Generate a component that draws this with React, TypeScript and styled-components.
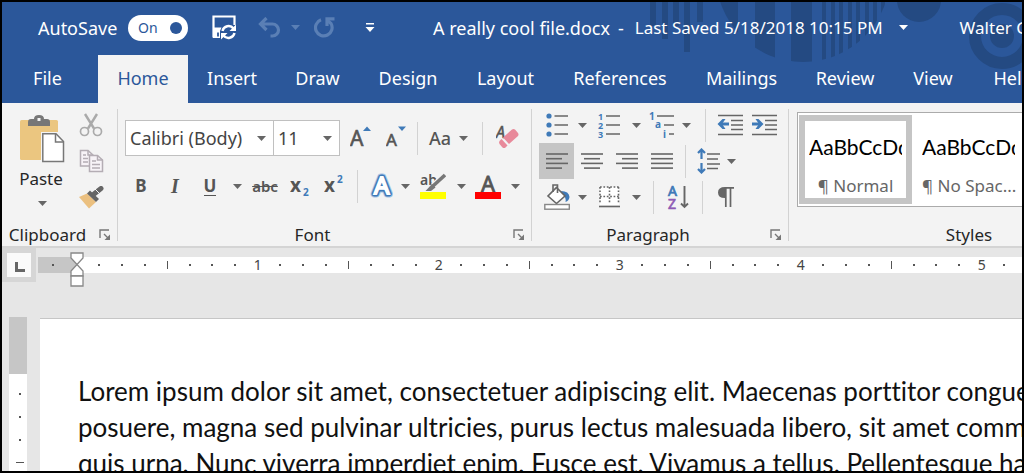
import React from "react";
import styled, { createGlobalStyle } from "styled-components";

const INK = "#666666";
const BLUE = "#3f7ab8";
const UI = '"Noto Sans", "Open Sans", sans-serif';

const GlobalStyle = createGlobalStyle`
  * { box-sizing: border-box; }
  body { margin: 0; background: #000; }
  button, select { font: inherit; color: inherit; }
  svg { display: block; flex: none; }
`;

const Frame = styled.div`
  display: flex;
  flex-direction: column;
  height: 100vh;
  border: 2px solid #000;
  overflow: hidden;
  background: #e6e6e6;
  font: 17px/24px ${UI};
  color: #262626;
`;

const Header = styled.header`
  position: relative;
  flex: none;
  background: #2b579a;
  color: #fff;
  overflow: hidden;
`;

const HeaderArt = styled.svg`
  position: absolute;
  top: 0;
  right: 0;
`;

const TitleBar = styled.div`
  position: relative;
  display: flex;
  align-items: center;
  height: 53px;
  padding: 0 0 2px 36px;
  white-space: nowrap;
  font-size: 18px;
`;

const AutoSave = styled.label`
  flex: none;
  display: flex;
  align-items: center;
  width: 150px;
  justify-content: space-between;
`;

const Switch = styled.span`
  display: flex;
  align-items: center;
  width: 60px;
  height: 26px;
  padding-left: 10px;
  border-radius: 13px;
  background: #fff;
  color: #2b579a;
  font-size: 14px;

  input {
    appearance: none;
    width: 12px;
    height: 12px;
    margin: 0 0 0 12px;
    border-radius: 50%;
    background: #2b579a;
  }
`;

const QuickButton = styled.button<{ $w: number }>`
  flex: none;
  display: flex;
  justify-content: center;
  width: ${(p) => p.$w}px;
  padding: 0;
  border: 0;
  background: none;
`;

const QuickTools = styled.div`
  flex: none;
  display: flex;
  align-items: center;
  margin-left: 13px;
  width: 232px;
`;

const FileName = styled.button`
  flex: none;
  display: flex;
  align-items: center;
  gap: 8px;
  padding: 0;
  border: 0;
  background: none;
  white-space: nowrap;
  svg { margin-left: 8px; }
`;

const SavedAt = styled.span`
  margin-left: 3px;
  font-size: 17px;
`;

const Account = styled.button`
  flex: none;
  padding: 0;
  border: 0;
  margin-left: 52px;
  background: none;
  font-size: 17px;
`;

const Tabs = styled.nav`
  position: relative;
  display: flex;
  height: 48px;
  white-space: nowrap;
`;

const Tab = styled.button<{ $w: number; $active?: boolean }>`
  flex: none;
  width: ${(p) => p.$w}px;
  padding: 0 0 2px;
  border: 0;
  font-size: 18px;
  background: ${(p) => (p.$active ? "#f3f3f3" : "none")};
  color: ${(p) => (p.$active ? "#2b579a" : "#fff")};
  &:first-child { margin-right: 5px; }
`;

const Ribbon = styled.div`
  flex: none;
  display: flex;
  height: 145px;
  background: #f3f3f3;
  border-bottom: 2px solid #d4d4d4;
  overflow: hidden;
`;

const Group = styled.section<{ $w: number }>`
  flex: 0 0 ${(p) => p.$w}px;
  display: flex;
  flex-direction: column;
  justify-content: space-between;
`;

const Divider = styled.div`
  flex: none;
  width: 1px;
  height: 132px;
  margin-top: 6px;
  background: #d2d2d2;
`;

const GroupFooter = styled.div`
  display: flex;
  align-items: center;
  height: 23px;
`;

const GroupLabel = styled.span`
  flex: 1;
  text-align: center;
`;

const Launcher = styled.button`
  width: 24px;
  padding: 0 0 0 6px;
  border: 0;
  background: none;
`;

const ClipboardBody = styled.div`
  display: flex;
  padding-top: 4px;
`;

const PasteButton = styled.button`
  display: flex;
  flex-direction: column;
  align-items: center;
  width: 76px;
  padding: 8px 0 0 4px;
  border: 0;
  background: none;
  > span { margin: 4px 2px 10px 0; }
`;

const Column = styled.div`
  display: flex;
  flex-direction: column;
`;

const Rows = styled.div<{ $top: number; $gap: number }>`
  display: flex;
  flex-direction: column;
  gap: ${(p) => p.$gap}px;
  padding: ${(p) => p.$top}px 0 0 7px;
`;

const Row = styled.div<{ $h: number }>`
  display: flex;
  align-items: center;
  height: ${(p) => p.$h}px;
`;

const Tool = styled.button<{ $w: number; $on?: boolean }>`
  flex: none;
  display: flex;
  align-items: center;
  justify-content: center;
  width: ${(p) => p.$w}px;
  height: 36px;
  padding: 0;
  border: 0;
  color: #555;
  background: ${(p) => (p.$on ? "#c5c5c5" : "none")};
`;

const CaseLabel = styled.span`
  font-size: 18px;
  font-weight: 500;
`;

const Bold = styled.span`
  font-weight: 700;
`;

const Italic = styled.span`
  font: italic 700 20px/24px "Liberation Serif", serif;
`;

const Underline = styled.span`
  font-weight: 700;
  line-height: 18px;
  border-bottom: 1px solid #555;
`;

const Strike = styled.s`
  font-size: 15px;
  font-weight: 600;
`;

const Rule = styled.div<{ $before?: number; $after?: number }>`
  flex: none;
  width: 1px;
  height: 33px;
  margin: 0 ${(p) => p.$after ?? 6}px 0 ${(p) => p.$before ?? 6}px;
  background: #d2d2d2;
`;

const Picker = styled.div<{ $w: number }>`
  position: relative;
  flex: none;
  width: ${(p) => p.$w}px;
  margin-right: -1px;

  select {
    appearance: none;
    display: block;
    width: 100%;
    height: 36px;
    padding: 0 4px;
    border: 1px solid #c0c0c0;
    border-radius: 0;
    background: #fff;
    color: #444;
    font-size: 18px;
    outline: 0;
  }
  svg {
    position: absolute;
    right: 8px;
    top: 16px;
    pointer-events: none;
  }
`;

const Gallery = styled.div`
  display: flex;
  margin: 9px 0 0 8px;
  padding: 2px 1px;
  border: 1px solid #ababab;
  background: #fff;
`;

const StyleCard = styled.button<{ $on?: boolean }>`
  flex: none;
  width: 113px;
  height: 89px;
  padding: 12px 4px 0;
  border: 6px solid ${(p) => (p.$on ? "#c5c5c5" : "transparent")};
  background: none;
  color: #666;
  white-space: nowrap;
`;

const Sample = styled.span`
  display: block;
  overflow: hidden;
  margin-bottom: 14px;
  font: 21px/26px Lato, sans-serif;
  color: #000;
  text-align: left;
`;

const RulerRow = styled.div`
  flex: none;
  display: flex;
  height: 34px;
`;

const TabStop = styled.button`
  flex: none;
  display: flex;
  align-items: center;
  justify-content: center;
  width: 34px;
  padding: 4px 0 0 2px;
  border: 5px solid #d6d6d6;
  background: #fafafa;
`;

const Ruler = styled.div`
  flex: 1;
  display: flex;
  height: 16px;
  margin: 9px 0 0 2px;
  min-width: 0;
  background: #fff;
  font-size: 14px;
  line-height: 16px;
  color: #444;
`;

const RulerMargin = styled.div`
  flex: none;
  display: flex;
  align-items: center;
  position: relative;
  width: 39px;
  padding-left: 14px;
  margin-right: 11px;
  background: #c6c6c6;
`;

const Indent = styled.svg`
  position: absolute;
  right: -7px;
  top: -5px;
`;

const Inch = styled.div`
  flex: 0 0 181px;
  display: grid;
  grid-template-columns: repeat(8, 1fr);
  align-items: center;
  justify-items: center;
`;

const Mark = styled.i<{ $w: number; $h: number }>`
  width: ${(p) => p.$w}px;
  height: ${(p) => p.$h}px;
  background: #555;
`;

const Workspace = styled.main`
  flex: 1;
  min-height: 0;
  display: flex;
  gap: 13px;
  padding: 35px 0 0 7px;
  overflow: hidden;
`;

const SideRuler = styled.div`
  flex: none;
  display: flex;
  flex-direction: column;
  align-items: center;
  width: 18px;
  background: #fff;
`;

const SideMargin = styled.div`
  width: 100%;
  height: 57px;
  margin-bottom: 19px;
  background: #c6c6c6;
`;

const SideMarks = styled.div`
  display: flex;
  flex-direction: column;
  align-items: center;
  gap: 21px;
  padding-left: 4px;
`;

const Page = styled.article`
  flex: 1;
  min-width: 0;
  margin-top: 1px;
  padding: 54px 0 0 38px;
  border-top: 1px solid #c6c6c6;
  background: #fff;
  color: #111;
  font: 26px/36px Lato, sans-serif;
  font-variant-ligatures: none;
  white-space: nowrap;
  overflow: hidden;
  p { margin: 0; }
`;

const Caret = ({ fill = INK }: { fill?: string }) => (
  <svg width="9" height="5" viewBox="0 0 9 5"><path d="M0 0H9L4.500 5Z" fill={fill} /></svg>
);

const Drop = ({ label, w = 14 }: { label: string; w?: number }) => (
  <Tool $w={w} aria-label={label}><Caret /></Tool>
);

const LauncherIcon = () => (
  <svg width="12" height="12" viewBox="0 0 12 12" fill="none" stroke="#777" strokeWidth="1.400">
    <path d="M1 9V1H10M5 5L10 10" /><path d="M11 5.500V11H5.500Z" fill="#777" stroke="none" />
  </svg>
);

const Lines = ({ rows }: { rows: [number, number][] }) => (
  <svg width="24" height="18" viewBox="0 0 24 18" stroke={INK} strokeWidth="1.600">
    {rows.map(([a, b], i) => <path key={i} d={`M${a} ${2 + i * 4.700}H${b}`} />)}
  </svg>
);

const HeaderDecor = () => (
  <HeaderArt width="374" height="70" viewBox="648 2 374 70" fill="#244a82" aria-hidden="true">
    <defs><clipPath id="disc"><circle cx="803" cy="-25" r="87" /></clipPath></defs>
    <path d="M650 0h6v26h-6zM662 0h6v39h-6zM673 0h6v26h-6zM684 0h6v52h-6zM697 0h6v22h-6z" />
    <g clipPath="url(#disc)">
      <path d="M720 0h18v70h-18zM755 0h20v70h-20zM791 0h21v70h-21z" />
      {[822, 831, 839, 848, 856, 865, 873, 881].map((x) => <rect key={x} x={x} y="0" width="4" height="70" />)}
    </g>
    <circle cx="919" cy="0" r="22" />
    <circle cx="1002" cy="36" r="27" fill="none" stroke="#244a82" strokeWidth="12" />
    <circle cx="1002" cy="36" r="12" />
  </HeaderArt>
);

const SaveIcon = () => (
  <svg width="25" height="25" viewBox="0 0 25 25" fill="none" stroke="#fff">
    <path d="M1.500 22.500V1.500H22.500V10" strokeWidth="2.200" />
    <path d="M1 12.500H9.500L8 16V23H1Z" fill="#fff" stroke="none" />
    <path d="M6 17.500V21.500" stroke="#2b579a" strokeWidth="1.800" />
    <path d="M10.500 16A6.200 6.200 0 0 1 21.500 13.500M22.500 18A6.200 6.200 0 0 1 11.500 20.500" strokeWidth="2.400" />
    <path d="M24 9.500V16H17.500ZM9 24.500V18H15.500Z" fill="#fff" stroke="none" />
  </svg>
);

const UndoIcon = () => (
  <svg width="23" height="21" viewBox="0 0 23 21" fill="none" stroke="#5a7fb5" strokeWidth="3.200">
    <path d="M8.500 1L2.500 7L8.500 13M3 7H14.500A6 6 0 0 1 14.500 19H12.500" />
  </svg>
);

const RedoIcon = () => (
  <svg width="21" height="21" viewBox="0 0 21 21" fill="none" stroke="#5a7fb5" strokeWidth="3.200">
    <path d="M7 2.800A8.300 8.300 0 1 0 17 6.500L13 3" /><path d="M20.500 1.800H13V9" />
  </svg>
);

const MoreIcon = () => (
  <svg width="10" height="10" viewBox="0 0 10 10" fill="#fff"><path d="M1 0H9V1.600H1ZM0.500 4H9.500L5 9Z" /></svg>
);

const PasteIcon = () => (
  <svg width="45" height="48" viewBox="0 0 45 48">
    <rect x="0" y="5" width="38" height="40" rx="1.500" fill="#ebc680" />
    <path d="M8 11V7Q8 4 11 4H14Q14 0 19 0T24 4H27Q30 4 30 7V11Z" fill="#777" />
    <rect x="17.500" y="3" width="3" height="3" fill="#f3f3f3" />
    <path d="M21 17H45V48H21Z" fill="#f3f3f3" />
    <path d="M22.800 18.800H36L43.500 26.500V46.500H22.800Z" fill="#fff" stroke="#777" strokeWidth="1.500" />
    <path d="M35.500 19V27H43.500" fill="none" stroke="#777" strokeWidth="1.500" />
  </svg>
);

const CutIcon = () => (
  <svg width="24" height="24" viewBox="0 0 24 24" fill="none" stroke="#aaa">
    <path d="M6 1L15 15.500M18 1L9 15.500" strokeWidth="2.400" />
    <circle cx="5.500" cy="18.500" r="4" strokeWidth="1.700" /><circle cx="18.500" cy="18.500" r="4" strokeWidth="1.700" />
  </svg>
);

const CopyIcon = () => (
  <svg width="25" height="24" viewBox="0 0 25 24" fill="#f7f3f7" stroke="#b4adb4" strokeWidth="1.500">
    <path d="M1.500 1.500H9L14 6V17H1.500Z" /><path d="M9 1.500V6H14M4 6H7M4 9.500H9M4 13H9" fill="none" />
    <path d="M10.500 6.500H18.500L23.500 11V22.500H10.500Z" /><path d="M18.500 6.500V11H23.500M13 12H17M13 15.500H21M13 19H21" fill="none" />
  </svg>
);

const PainterIcon = () => (
  <svg width="26" height="23" viewBox="0 0 26 23">
    <path d="M1 11L9 7.500L18 16L11 22.500Z" fill="#ebc080" />
    <path d="M9 7.500L12 4.500L21 13L18 16Z" fill="#666" /><path d="M16 8L23 2.500" stroke="#666" strokeWidth="5" strokeLinecap="round" />
    <path d="M17 3L22 8" stroke="#f3f3f3" strokeWidth="1" />
  </svg>
);

const SizeIcon = ({ up }: { up?: boolean }) => (
  <svg width="22" height="26" viewBox="0 0 22 26" fontFamily={UI} fill="#555" stroke="#555" strokeWidth="0.600">
    <text x="0" y="21" fontSize={up ? 21 : 17}>A</text>
    <path d={up ? "M13 6H21L17 1.500Z" : "M12 1.500H20L16 6Z"} fill={BLUE} stroke="none" />
  </svg>
);

const EraserIcon = () => (
  <svg width="24" height="26" viewBox="0 0 24 26" fontFamily={UI}>
    <text x="0" y="13" fontSize="16" fontStyle="italic" fill="#555" stroke="#555" strokeWidth="0.500">A</text>
    <path d="M7 12.500L16 4.500Q17.500 3.500 19 4.500L22 8Q23 9.500 22 11L13 19Z" fill="#e8899a" />
    <path d="M5.500 14L11.500 20.500L9.500 22.500Q8 23.500 6.500 22.500L3.500 19Q2.500 17.500 3.500 16Z" fill="#e8899a" />
  </svg>
);

const ScriptIcon = ({ sup }: { sup?: boolean }) => (
  <svg width="21" height="24" viewBox="0 0 21 24" fontFamily={UI} fontWeight="700">
    <text x="0" y="18" fontSize="19" fill="#555">x</text>
    <text x="13" y={sup ? 9 : 22} fontSize="10" fill={BLUE}>2</text>
  </svg>
);

const EffectsIcon = () => (
  <svg width="24" height="26" viewBox="0 0 24 26" fontFamily={UI} fontSize="24">
    <text x="5" y="21" stroke="#a9c6e6" strokeWidth="7" strokeLinejoin="round">A</text>
    <text x="5" y="21" stroke={BLUE} strokeWidth="5" strokeLinejoin="round">A</text>
    <text x="5" y="21" fill="#fff" stroke="#fff" strokeWidth="1.800">A</text>
  </svg>
);

const HighlightIcon = () => (
  <svg width="26" height="28" viewBox="0 0 26 28" fontFamily={UI}>
    <text x="0" y="13" fontSize="14" fontWeight="600" fill="#555">ab</text>
    <path d="M25 3L13 14" stroke="#f3f3f3" strokeWidth="6" /><path d="M25 3L13 14" stroke="#777" strokeWidth="3.600" />
    <path d="M12 12L15.500 15.500L11 19H5.500Z" fill="#777" />
    <rect x="0" y="20" width="26" height="7" fill="#ff0" />
  </svg>
);

const FontColorIcon = () => (
  <svg width="26" height="28" viewBox="0 0 26 28" fontFamily={UI}>
    <text x="13" y="20" textAnchor="middle" fontSize="22" fill="#555" stroke="#555" strokeWidth="0.800">A</text>
    <rect x="0" y="20" width="26" height="7" fill="#f00" />
  </svg>
);

const BulletsIcon = () => (
  <svg width="22" height="24" viewBox="0 0 22 24">
    {[3, 12, 21].map((y) => (
      <g key={y}><circle cx="3" cy={y} r="2.600" fill={BLUE} /><path d={`M8.500 ${y}H22`} stroke={INK} strokeWidth="1.500" /></g>
    ))}
  </svg>
);

const NumbersIcon = () => (
  <svg width="24" height="28" viewBox="0 0 24 28" fontFamily={UI} fontWeight="700" fontSize="9" fill={BLUE}>
    {[5, 14, 23].map((y, i) => (
      <g key={y}><text x="1" y={y + 4}>{i + 1}</text><path d={`M9 ${y}H23`} stroke={INK} strokeWidth="1.500" /></g>
    ))}
  </svg>
);

const MultilevelIcon = () => (
  <svg width="27" height="28" viewBox="0 0 27 28" fontFamily={UI} fontWeight="700" fontSize="10" fill={BLUE}>
    <text x="1" y="9">1</text><text x="7" y="17">a</text><text x="15" y="27">i</text>
    <path d="M9 5H26M16 14H26M21 23H26" stroke={INK} strokeWidth="1.500" />
  </svg>
);

const IndentIcon = ({ right }: { right?: boolean }) => (
  <svg width="26" height="22" viewBox="0 0 26 22" fill="none" strokeWidth="1.500">
    <path d="M1 1.500H26M14 6.500H26M14 11H26M14 15.500H26M1 20.500H26" stroke={INK} />
    <path d={right ? "M1 10H9" : "M4 10H12"} stroke={BLUE} strokeWidth="3" />
    <path d={right ? "M4.500 5H7.500L12.500 10L7.500 15H4.500L8 10Z" : "M8.500 5H5.500L0.500 10L5.500 15H8.500L5 10Z"} fill={BLUE} />
  </svg>
);

const SpacingIcon = () => (
  <svg width="23" height="26" viewBox="0 0 23 26" fill="none">
    <path d="M4.500 1V11M4.500 15V25M1 5L4.500 1.500L8 5M1 21L4.500 24.500L8 21" stroke={BLUE} strokeWidth="2.200" />
    <path d="M10 6H23M10 11H21M10 16H23M10 20.500H21" stroke={INK} strokeWidth="1.600" />
  </svg>
);

const ShadingIcon = () => (
  <svg width="26" height="26" viewBox="0 0 26 26">
    <path d="M17 7Q25 7 25.500 13Q25 17 21.500 18Q22.500 13 18 10Z" fill={BLUE} />
    <path d="M12.500 3.500L21 12L12.500 19.500L4 12Z" fill="#fff" stroke={INK} strokeWidth="1.600" />
    <path d="M9 8V1H13.500V9" fill="none" stroke={INK} strokeWidth="1.600" />
    <rect x="0.800" y="20.500" width="24.500" height="4.700" fill="#fff" stroke="#888" strokeWidth="1.400" />
  </svg>
);

const BordersIcon = () => (
  <svg width="21" height="22" viewBox="0 0 21 22" fill="none" stroke={INK} strokeWidth="1.600">
    <rect x="1" y="1" width="19" height="18" fill="#fff" stroke="none" />
    <path d="M1 1H20M1 10.500H20M1 1V18M10.500 1V18M19.500 1V18" strokeDasharray="1.700 1.700" /><path d="M0 20.500H21" />
  </svg>
);

const SortIcon = () => (
  <svg width="22" height="26" viewBox="0 0 22 26" fontFamily={UI} fontSize="14" strokeWidth="0.700">
    <text x="1" y="12" fill={BLUE} stroke={BLUE}>A</text><text x="1" y="25" fill="#8e5bb5" stroke="#8e5bb5">Z</text>
    <path d="M17.500 2V23M14 19.500L17.500 23L21 19.500" fill="none" stroke={INK} strokeWidth="1.900" />
  </svg>
);

const PilcrowIcon = () => (
  <svg width="16" height="21" viewBox="0 0 16 21">
    <path d="M7 11Q0 11 0 5.500T7 0H16V1.800H7Z" fill={INK} /><path d="M7.800 1V20M12.500 1V20" stroke={INK} strokeWidth="1.700" />
  </svg>
);

const inchMarks = (n: number) => (
  <Inch key={n}>
    {[1, 2, 3, 4, 5, 6, 7].map((i) => <Mark key={i} $w={i === 4 ? 1 : 2} $h={i === 4 ? 8 : 2} />)}
    <span>{n}</span>
  </Inch>
);

const Footer = ({ name }: { name: string }) => (
  <GroupFooter>
    <GroupLabel>{name}</GroupLabel>
    <Launcher aria-label={`${name} settings`}><LauncherIcon /></Launcher>
  </GroupFooter>
);

const tabs: [string, number][] = [
  ["File", 91], ["Home", 90], ["Insert", 88], ["Draw", 83], ["Design", 98], ["Layout", 97],
  ["References", 132], ["Mailings", 111], ["Review", 96], ["View", 80], ["Help", 80],
];

export default function App() {
  return (
    <Frame>
      <GlobalStyle />
      <Header>
        <HeaderDecor />
        <TitleBar>
          <AutoSave>AutoSave<Switch>On<input type="checkbox" defaultChecked /></Switch></AutoSave>
          <QuickTools>
            <QuickButton $w={46} aria-label="Save"><SaveIcon /></QuickButton>
            <QuickButton $w={44} aria-label="Undo"><UndoIcon /></QuickButton>
            <QuickButton $w={8} aria-label="Undo history"><Caret fill="#5a7fb5" /></QuickButton>
            <QuickButton $w={50} aria-label="Redo"><RedoIcon /></QuickButton>
            <QuickButton $w={42} aria-label="Customize toolbar"><MoreIcon /></QuickButton>
          </QuickTools>
          <FileName>
            <span>A really cool file.docx</span><span>-</span><SavedAt>Last Saved 5/18/2018 10:15 PM</SavedAt>
            <Caret fill="#fff" />
          </FileName>
          <Account>Walter Glenn</Account>
        </TitleBar>
        <Tabs>
          {tabs.map(([name, w]) => <Tab key={name} $w={w} $active={name === "Home"}>{name}</Tab>)}
        </Tabs>
      </Header>

      <Ribbon>
        <Group $w={115}>
          <ClipboardBody>
            <PasteButton><PasteIcon /><span>Paste</span><Caret /></PasteButton>
            <Column>
              <Tool $w={26} aria-label="Cut"><CutIcon /></Tool>
              <Tool $w={26} aria-label="Copy"><CopyIcon /></Tool>
              <Tool $w={26} aria-label="Format painter"><PainterIcon /></Tool>
            </Column>
          </ClipboardBody>
          <Footer name="Clipboard" />
        </Group>
        <Divider />
        <Group $w={413}>
          <Rows $top={15} $gap={8}>
            <Row $h={40}>
              <Picker $w={149}>
                <select aria-label="Font"><option>Calibri (Body)</option></select><Caret />
              </Picker>
              <Picker $w={67}>
                <select aria-label="Font size"><option>11</option></select><Caret />
              </Picker>
              <Tool $w={44} aria-label="Grow font"><SizeIcon up /></Tool>
              <Tool $w={28} aria-label="Shrink font"><SizeIcon /></Tool>
              <Rule />
              <Tool $w={32}><CaseLabel>Aa</CaseLabel></Tool>
              <Drop label="Change case" />
              <Rule $before={12} $after={12} />
              <Tool $w={26} aria-label="Clear formatting"><EraserIcon /></Tool>
            </Row>
            <Row $h={40}>
              <Tool $w={32}><Bold>B</Bold></Tool>
              <Tool $w={36}><Italic>I</Italic></Tool>
              <Tool $w={34}><Underline>U</Underline></Tool>
              <Drop label="Underline style" w={20} />
              <Tool $w={36}><Strike>abc</Strike></Tool>
              <Tool $w={34} aria-label="Subscript"><ScriptIcon /></Tool>
              <Tool $w={34} aria-label="Superscript"><ScriptIcon sup /></Tool>
              <Rule />
              <Tool $w={34} aria-label="Text effects"><EffectsIcon /></Tool>
              <Drop label="Text effect styles" />
              <Tool $w={42} aria-label="Highlight"><HighlightIcon /></Tool>
              <Drop label="Highlight color" />
              <Tool $w={40} aria-label="Font color"><FontColorIcon /></Tool>
              <Drop label="Font colors" />
            </Row>
          </Rows>
          <Footer name="Font" />
        </Group>
        <Divider />
        <Group $w={256}>
          <Rows $top={4} $gap={0}>
            <Row $h={36}>
              <Tool $w={36} aria-label="Bullets"><BulletsIcon /></Tool>
              <Drop label="Bullet styles" />
              <Tool $w={40} aria-label="Numbering"><NumbersIcon /></Tool>
              <Drop label="Number styles" />
              <Tool $w={36} aria-label="Multilevel list"><MultilevelIcon /></Tool>
              <Drop label="List levels" />
              <Rule $before={12} $after={8} />
              <Tool $w={32} aria-label="Decrease indent"><IndentIcon /></Tool>
              <Tool $w={36} aria-label="Increase indent"><IndentIcon right /></Tool>
            </Row>
            <Row $h={36}>
              <Tool $w={35} $on aria-label="Align left"><Lines rows={[[1, 23], [1, 17], [1, 23], [1, 17]]} /></Tool>
              <Tool $w={35} aria-label="Center"><Lines rows={[[1, 23], [4, 20], [1, 23], [4, 20]]} /></Tool>
              <Tool $w={35} aria-label="Align right"><Lines rows={[[1, 23], [7, 23], [1, 23], [7, 23]]} /></Tool>
              <Tool $w={35} aria-label="Justify"><Lines rows={[[1, 23], [1, 23], [1, 23], [1, 23]]} /></Tool>
              <Rule />
              <Tool $w={32} aria-label="Line spacing"><SpacingIcon /></Tool>
              <Drop label="Spacing options" />
            </Row>
            <Row $h={36}>
              <Tool $w={36} aria-label="Shading"><ShadingIcon /></Tool>
              <Drop label="Shading colors" />
              <Tool $w={40} aria-label="Borders"><BordersIcon /></Tool>
              <Drop label="Border styles" />
              <Rule $before={10} />
              <Tool $w={36} aria-label="Sort"><SortIcon /></Tool>
              <Rule />
              <Tool $w={34} aria-label="Show marks"><PilcrowIcon /></Tool>
            </Row>
          </Rows>
          <Footer name="Paragraph" />
        </Group>
        <Divider />
        <Group $w={360}>
          <Gallery>
            <StyleCard $on><Sample>AaBbCcDd</Sample>¶ Normal</StyleCard>
            <StyleCard><Sample>AaBbCcDd</Sample>¶ No Spac...</StyleCard>
          </Gallery>
          <GroupFooter><GroupLabel>Styles</GroupLabel></GroupFooter>
        </Group>
      </Ribbon>

      <RulerRow>
        <TabStop aria-label="Tab stop">
          <svg width="10" height="10" viewBox="0 0 10 10"><path d="M1.500 0V8.500H10" fill="none" stroke="#666" strokeWidth="3" /></svg>
        </TabStop>
        <Ruler>
          <RulerMargin>
            <Mark $w={2} $h={2} />
            <Indent width="14" height="36" viewBox="0 0 14 36" fill="#fff" stroke="#888" strokeWidth="1.300">
              <path d="M1 1H13V6L7 12.500L1 6Z" /><path d="M7 12.500L13 19V24H1V19Z" /><path d="M1 24H13V34H1Z" />
            </Indent>
          </RulerMargin>
          {[1, 2, 3, 4, 5, 6].map(inchMarks)}
        </Ruler>
      </RulerRow>

      <Workspace>
        <SideRuler>
          <SideMargin />
          <SideMarks>
            <Mark $w={2} $h={2} /><Mark $w={2} $h={2} /><Mark $w={2} $h={2} /><Mark $w={8} $h={1} />
          </SideMarks>
        </SideRuler>
        <Page>
          <p>Lorem ipsum dolor sit amet, consectetuer adipiscing elit. Maecenas porttitor congue massa.</p>
          <p>posuere, magna sed pulvinar ultricies, purus lectus malesuada libero, sit amet commodo</p>
          <p>quis urna. Nunc viverra imperdiet enim. Fusce est. Vivamus a tellus. Pellentesque habitant</p>
        </Page>
      </Workspace>
    </Frame>
  );
}
